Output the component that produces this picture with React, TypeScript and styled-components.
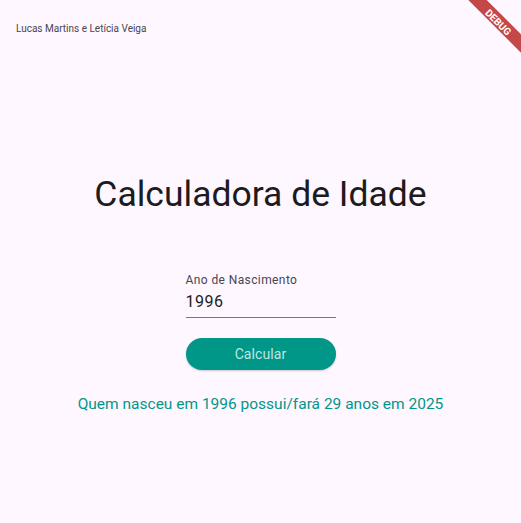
import React from "react";
import styled, { createGlobalStyle } from "styled-components";

const Global = createGlobalStyle`
  html, body { margin: 0; padding: 0; background: #fef7ff; overflow: hidden; }
  body { font-family: Roboto, "Noto Sans", sans-serif; }
`;

const Page = styled.div`
  position: relative;
  width: 521px;
  height: 523px;
  background: #fef7ff;
  overflow: hidden;
  display: flex;
  flex-direction: column;
`;

const Header = styled.div`
  height: 56px;
  padding: 0 16px;
  display: flex;
  align-items: center;
  font-size: 10px;
  color: #49454f;
`;

const Body = styled.div`
  flex: 1;
  display: flex;
  flex-direction: column;
  align-items: center;
  padding-top: 116px;
`;

const Title = styled.h1`
  margin: 0;
  font-weight: 400;
  font-size: 35.5px;
  line-height: 44px;
  color: #1d1b20;
`;

const Field = styled.div`
  margin-top: 56px;
  width: 150px;
  display: flex;
  flex-direction: column;
  border-bottom: 1px solid #79747e;
  padding-bottom: 5px;
`;

const Label = styled.label`
  font-size: 12px;
  line-height: 16px;
  color: #49454f;
  letter-spacing: 0.4px;
`;

const Value = styled.div`
  margin-top: 4px;
  font-size: 16px;
  line-height: 20px;
  color: #1d1b20;
  letter-spacing: 0.5px;
`;

const Button = styled.button`
  margin-top: 20px;
  width: 150px;
  height: 32px;
  border: none;
  border-radius: 16px;
  background: #009688;
  color: #bfe6e1;
  font-family: Roboto, sans-serif;
  font-size: 14px;
  letter-spacing: 0.1px;
  box-shadow: 0 1px 2px rgba(0, 0, 0, 0.2);
`;

const Result = styled.p`
  margin: 22px 0 0;
  font-size: 15.5px;
  line-height: 24px;
  color: #009688;
`;

const Banner = styled.div`
  position: absolute;
  top: 21px;
  right: 22px;
  width: 120px;
  height: 13px;
  margin-right: -60px;
  margin-top: -6.5px;
  box-sizing: border-box;
  padding-top: 3px;
  background: rgba(183, 28, 28, 0.8);
  transform: rotate(45deg);
  display: flex;
  align-items: center;
  justify-content: center;
  color: #fff;
  font-weight: 700;
  font-size: 10px;
  font-family: Roboto, sans-serif;
  line-height: 10px;
`;

export default function App() {
  return (
    <Page>
      <Global />
      <Header>Lucas Martins e Letícia Veiga</Header>
      <Body>
        <Title>Calculadora de Idade</Title>
        <Field>
          <Label>Ano de Nascimento</Label>
          <Value>1996</Value>
        </Field>
        <Button>Calcular</Button>
        <Result>Quem nasceu em 1996 possui/fará 29 anos em 2025</Result>
      </Body>
      <Banner>DEBUG</Banner>
    </Page>
  );
}
